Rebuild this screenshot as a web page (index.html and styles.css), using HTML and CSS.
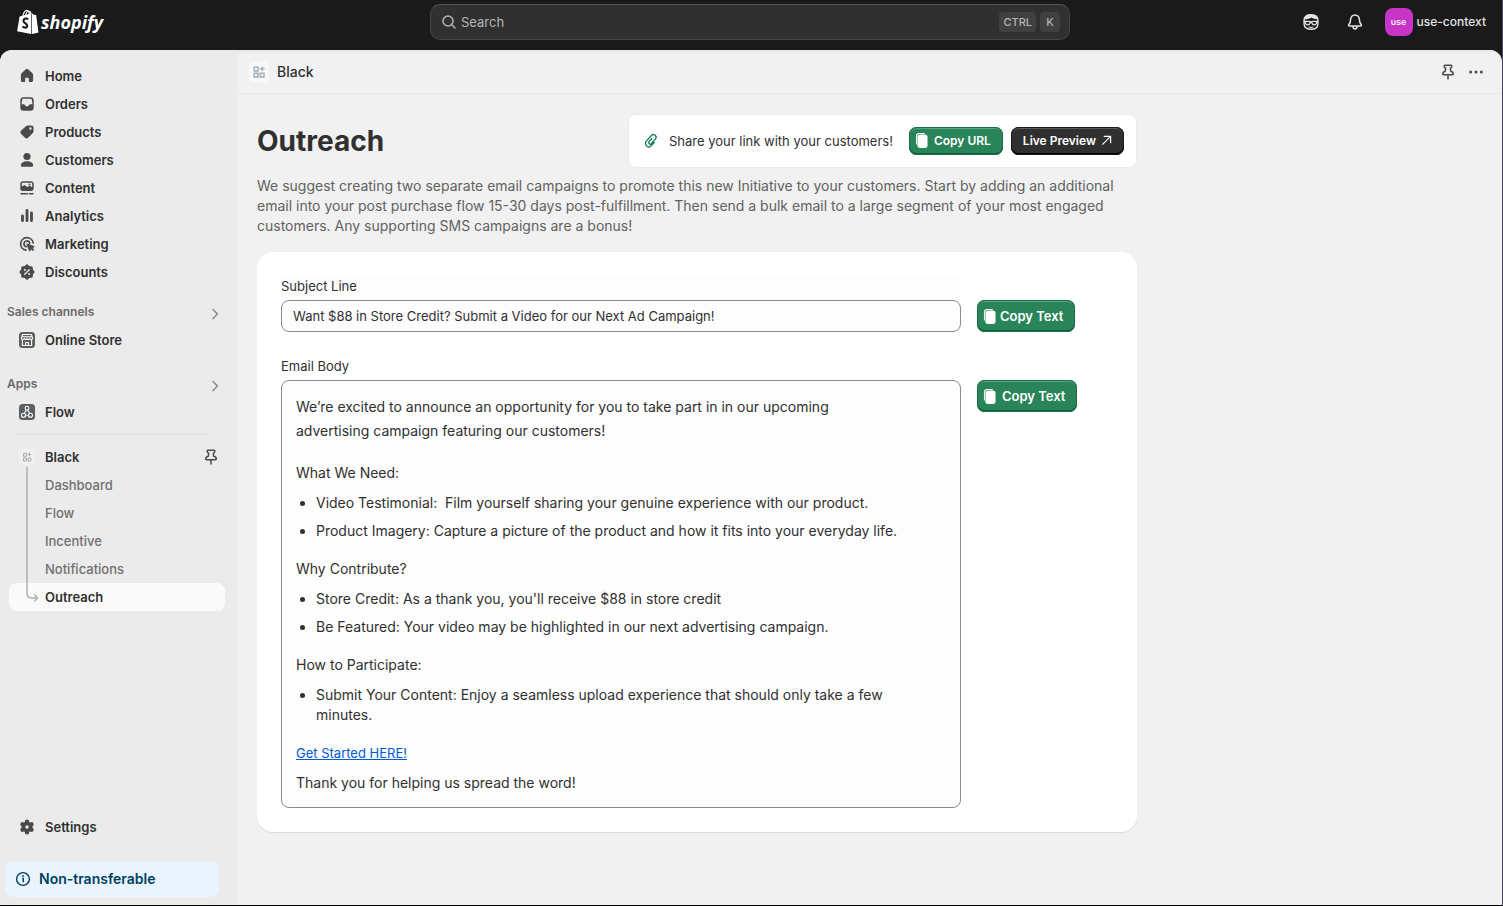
FILE: index.html
```html
<!DOCTYPE html>
<html lang="en">
<head>
<meta charset="utf-8">
<title>Outreach</title>
<link rel="stylesheet" href="styles.css">
</head>
<body>
<svg class="sprite" aria-hidden="true">
  <symbol id="pin" viewBox="0 0 20 20"><path d="M7 3.2h6c.6 0 1 .5.8 1.100l-.3.900c-.2.500-.6.800-1.200.800l.4 3.200c1.600.4 2.600 1.500 2.600 2.900 0 .5-.3.700-.7.700H5.400c-.4 0-.7-.2-.7-.700 0-1.400 1-2.500 2.600-2.900L7.700 6c-.6 0-1-.3-1.200-.800l-.3-.9C6 3.700 6.400 3.200 7 3.200zM10 12.900v4" fill="none" stroke="currentColor" stroke-width="1.5" stroke-linecap="round" stroke-linejoin="round"/></symbol>
  <symbol id="app" viewBox="0 0 20 20"><path d="M5.200 5.200h3.800v3.800H5.200zM5.200 11.200h3.800v3.800H5.200zM11.200 11.200h3.800v3.800h-3.800zM13.200 4.500v4.600M10.900 6.800h4.600" fill="none" stroke="currentColor" stroke-width="1.4"/></symbol>
  <symbol id="chev" viewBox="0 0 20 20"><path d="M8 5.500l4.500 4.500L8 14.500" fill="none" stroke="currentColor" stroke-width="1.5" stroke-linecap="round" stroke-linejoin="round"/></symbol>
  <symbol id="copy" viewBox="0 0 14 18"><path d="M4.500 1h4.800a2 2 0 0 1 1.700.900H5A3 3 0 0 0 2 4.900v9A2.500 2.500 0 0 1 1 12V4.500A3.500 3.500 0 0 1 4.500 1z" fill="#fff"/><rect x="2.600" y="2.600" width="10.900" height="14.400" rx="2.800" fill="#fff"/></symbol>
</svg>

<header class="topbar">
  <a class="logo" href="#" aria-label="Shopify">
    <svg width="22" height="26" viewBox="0 0 22 26"><path d="M6 7C6.300 3.500 8.200 1.200 10 1.400 11.700 1.500 12.400 3.600 12.300 6M8.500 7c.5-3 2-5 3.600-4.800 1.400.1 1.900 1.500 2 3.300" fill="none" stroke="#fff" stroke-width="1.100"/><path d="M2.600 7.600L14.300 4.200V25L.1 22.300z" fill="#fff"/><path d="M15 4.300l1.600 1.500 2.500.3L21.500 23.400 15 25z" fill="#fff"/><path d="M11.300 10.100C8.500 8.800 6.400 10 6.500 12c.1 2.500 3.800 2.400 3.700 4.900-.1 2.100-2.600 2.300-4.800.600" fill="none" stroke="#1a1a1a" stroke-width="2.100"/></svg>
    <span>shopify</span>
  </a>
  <label class="search">
    <svg width="16" height="16" viewBox="0 0 16 16"><circle cx="7" cy="7" r="5" fill="none" stroke="currentColor" stroke-width="1.500"/><path d="M10.700 10.700L14 14" stroke="currentColor" stroke-width="1.500" stroke-linecap="round"/></svg>
    <input type="search" placeholder="Search" aria-label="Search">
    <kbd>CTRL</kbd><kbd>K</kbd>
  </label>
  <div class="account">
    <button class="icon-btn" aria-label="Sidekick"><svg width="20" height="20" viewBox="0 0 20 20"><path d="M3.100 8.500C3.100 4.500 6 2.800 10 2.800s6.900 1.700 6.900 5.700v3.400c0 3.400-3 5.300-6.900 5.300s-6.900-1.900-6.900-5.300z" fill="none" stroke="#e3e3e3" stroke-width="1.400"/><path d="M3 7.300c0-3 2.500-4.800 7-4.800 3.500 0 6.500 1.600 7 4.600-3-.1-5-.6-6.500-1.600C8.500 6.800 6 7.500 3 7.300z" fill="#e3e3e3"/><path d="M2.700 9.300h4.600c1.200 0 1.800.7 2.700.7s1.500-.7 2.700-.7h4.600" fill="none" stroke="#e3e3e3" stroke-width="1.300"/><path d="M4.200 10c.2 2 1 2.800 2.500 2.800S9 11.800 9.600 10.300h.8c.6 1.500 1.400 2.500 2.900 2.500s2.300-.8 2.500-2.800" fill="none" stroke="#e3e3e3" stroke-width="1.300"/><path d="M7.700 15c1.500.4 3.100.4 4.600 0" fill="none" stroke="#e3e3e3" stroke-width="1.200"/></svg></button>
    <button class="icon-btn" aria-label="Notifications"><svg width="20" height="20" viewBox="0 0 20 20"><path d="M10 3a4.400 4.400 0 0 0-4.400 4.400c0 2.400-.4 3.500-1.800 5.100-.5.600-.2 1.600.7 1.600h11c.9 0 1.200-1 .7-1.600-1.400-1.600-1.800-2.700-1.800-5.100A4.400 4.400 0 0 0 10 3zM8 14.300c0 1.600.8 2.600 2 2.600s2-1 2-2.600" fill="none" stroke="#e3e3e3" stroke-width="1.500" stroke-linejoin="round"/></svg></button>
    <button class="user"><span class="avatar">use</span><span>use-context</span></button>
  </div>
</header>

<div class="frame">
  <nav class="sidebar">
    <a class="item" href="#"><svg class="ico" viewBox="0 0 20 20"><path d="M8.900 3.200a1.600 1.600 0 0 1 2.200 0l4.100 3.900c.6.500.9 1.200.9 2v5.200c0 1-.8 1.800-1.800 1.800h-1.500c-.6 0-1-.4-1-1v-2.400c0-.6-.5-1-1-1H9.200c-.6 0-1 .4-1 1v2.400c0 .6-.4 1-1 1H5.700c-1 0-1.800-.8-1.800-1.800V9.100c0-.8.3-1.500.9-2z" fill="currentColor"/></svg>Home</a>
    <a class="item" href="#"><svg class="ico" viewBox="0 0 20 20"><path fill-rule="evenodd" d="M6.300 3.200h7.400c1.700 0 3 1.300 3 3v7.500c0 1.700-1.300 3-3 3H6.300c-1.700 0-3-1.300-3-3V6.200c0-1.700 1.300-3 3-3zm.2 1.500c-.8 0-1.300.4-1.400 1.200l-.5 4.300h2.100c.6 0 .9.300 1.200.8.500 1 1.100 1.300 2.100 1.300s1.600-.3 2.100-1.300c.3-.5.600-.8 1.200-.8h2.100l-.5-4.300c-.1-.8-.6-1.200-1.400-1.200z" fill="currentColor"/></svg>Orders</a>
    <a class="item" href="#"><svg class="ico" viewBox="0 0 20 20"><path fill-rule="evenodd" d="M10.800 3.500h3.700c1.100 0 2 .9 2 2v3.600c0 .8-.3 1.500-.9 2.100l-4.500 4.500c-.9.900-2.300.9-3.100 0L4 11.800c-.9-.9-.9-2.300 0-3.100l4.600-4.300c.6-.6 1.300-.9 2.200-.9zm2.700 4.200a1.200 1.200 0 1 0 0-2.400 1.200 1.200 0 0 0 0 2.400z" fill="currentColor"/></svg>Products</a>
    <a class="item" href="#"><svg class="ico" viewBox="0 0 20 20"><circle cx="10" cy="6.500" r="3.600" fill="currentColor"/><path d="M10 11.300c-3.500 0-6.200 1.800-6.200 4.300 0 .7.400 1.100 1 1.100h10.400c.6 0 1-.4 1-1.100 0-2.500-2.700-4.300-6.200-4.300z" fill="currentColor"/></svg>Customers</a>
    <a class="item" href="#"><svg class="ico" viewBox="0 0 20 20"><path fill-rule="evenodd" d="M5.800 3.200h8.400c1.400 0 2.500 1.100 2.500 2.500v4.900c0 1.400-1.100 2.500-2.500 2.500H5.800a2.500 2.500 0 0 1-2.500-2.500V5.700c0-1.400 1.100-2.500 2.500-2.500zm0 1.500c-.6 0-1 .4-1 1v3l1.700-1.300c.5-.4 1-.4 1.500 0L10.400 9l1.400-.9c.5-.3 1-.3 1.500 0l1.900 1.200V5.700c0-.6-.4-1-1-1z" fill="currentColor"/><circle cx="12.500" cy="6.500" r="1" fill="currentColor"/><path d="M4 15.700h6.300M12.500 15.700H16" stroke="currentColor" stroke-width="1.500" stroke-linecap="round"/></svg>Content</a>
    <a class="item" href="#"><svg class="ico" viewBox="0 0 20 20"><path d="M5.500 10v4.700M10 4.500v10.200M14.500 7v7.700" stroke="currentColor" stroke-width="2.800" stroke-linecap="round"/></svg>Analytics</a>
    <a class="item" href="#"><svg class="ico" viewBox="0 0 20 20"><path d="M16.200 9A6.300 6.300 0 1 0 9 16.200M12.700 9.200A2.900 2.900 0 1 0 9.200 12.700" fill="none" stroke="currentColor" stroke-width="1.700" stroke-linecap="round"/><path d="M10.200 9.500l6.800 2.400c.7.300.7 1.100.1 1.400l-1.400.6 1.600 1.900-1.300 1.300-1.900-1.700-.7 1.500c-.3.600-1.100.6-1.400-.1l-2.500-6.600c-.200-.4.200-.9.700-.7z" fill="currentColor"/></svg>Marketing</a>
    <a class="item" href="#"><svg class="ico" viewBox="0 0 20 20"><g fill="currentColor"><rect x="4.200" y="4.200" width="11.600" height="11.600" rx="1.500"/><rect x="4.200" y="4.200" width="11.600" height="11.600" rx="1.500" transform="rotate(45 10 10)"/></g><path d="M7.700 12.300l4.600-4.600" stroke="#ebebeb" stroke-width="1.300" stroke-linecap="round"/><circle cx="7.900" cy="8" r="1" fill="#ebebeb"/><circle cx="12.100" cy="12" r="1" fill="#ebebeb"/></svg>Discounts</a>

    <button class="section">Sales channels<svg class="ico" ><use href="#chev"/></svg></button>
    <a class="item" href="#"><svg class="ico" viewBox="0 0 20 20"><rect x="2" y="2" width="16" height="16" rx="3.500" fill="#5c5f62"/><path d="M5.500 4.500h9l1.100 4c-.2 1.200-2 1.500-2.800.1-.7 1.300-2.200 1.300-2.800 0-.6 1.300-2.100 1.300-2.800 0-.8 1.400-2.600 1.100-2.800-.1zM5.400 10v5.500h9.200V10M8.600 15.500v-3h2.800v3M4.800 6.800h10.400" fill="none" stroke="#fff" stroke-width="1.100"/></svg>Online Store</a>
    <button class="section">Apps<svg class="ico"><use href="#chev"/></svg></button>
    <a class="item" href="#"><svg class="ico" viewBox="0 0 20 20"><rect x="2" y="2" width="16" height="16" rx="3.500" fill="#5c5f62"/><g fill="none" stroke="#fff" stroke-width="1.100"><circle cx="10" cy="6.200" r="1.900"/><circle cx="6.500" cy="13.300" r="2"/><circle cx="13.500" cy="13.300" r="2"/><path d="M9.300 8l-2 3.500M10.700 8l2 3.500M10 12.400v1.800"/></g></svg>Flow</a>
    <hr>
    <div class="app-group">
      <div class="item"><svg class="ico app-mini" viewBox="0 0 20 20"><rect x="2" y="2" width="16" height="16" rx="3" fill="#f0f0f0"/><path d="M6.500 6.300h2.800v3H6.500zM6.500 11h2.800v3H6.500zM11 11h2.800v3H11zM12.400 5.700v3.600M10.600 7.500h3.600" fill="none" stroke="#a9a9a9"/></svg><a href="#">Black</a><button class="pin" aria-label="Unpin Black"><svg class="ico"><use href="#pin"/></svg></button></div>
      <a class="item sub" href="#">Dashboard</a>
      <a class="item sub" href="#">Flow</a>
      <a class="item sub" href="#">Incentive</a>
      <a class="item sub" href="#">Notifications</a>
      <a class="item sub current" href="#" aria-current="page">Outreach</a>
      <svg class="branch" width="14" height="136" viewBox="0 0 14 136"><path d="M1 0v126q0 5 5 5h5M8.500 127.500l3 3.500-3 3.500" fill="none" stroke="#b0b0b0" stroke-width="1.500"/></svg>
    </div>
    <div class="side-end">
      <a class="item" href="#"><svg class="ico" viewBox="0 0 20 20"><path d="M10 4.800v10.400M5.500 7.400l9 5.200M5.500 12.600l9-5.200" stroke="currentColor" stroke-width="4.400" stroke-linecap="round"/><circle cx="10" cy="10" r="5.400" fill="currentColor"/><circle cx="10" cy="10" r="1.700" fill="#ebebeb"/></svg>Settings</a>
      <a class="notice" href="#"><svg width="16" height="16" viewBox="0 0 16 16"><circle cx="8" cy="8" r="6.400" fill="none" stroke="currentColor" stroke-width="1.400"/><path d="M7.300 7.500H8.300V11.300" fill="none" stroke="currentColor" stroke-width="1.400"/><circle cx="8" cy="5" r=".9" fill="currentColor"/></svg>Non-transferable</a>
    </div>
  </nav>

  <main class="main">
    <div class="appbar">
      <svg class="ico app-ico"><use href="#app"/></svg>
      <span class="app-name">Black</span>
      <button class="bar-btn" aria-label="Pin"><svg class="ico"><use href="#pin"/></svg></button>
      <button class="bar-btn" aria-label="More actions"><svg class="ico" viewBox="0 0 20 20"><circle cx="4.600" cy="10" r="1.500" fill="currentColor"/><circle cx="10" cy="10" r="1.500" fill="currentColor"/><circle cx="15.400" cy="10" r="1.500" fill="currentColor"/></svg></button>
    </div>
    <div class="content">
      <div class="heading">
        <h1>Outreach</h1>
        <div class="share">
          <svg class="ico clip" viewBox="0 0 20 20"><path d="M13.400 9v4.200a3.400 3.400 0 0 1-6.800 0V5.700a2.700 2.700 0 0 1 5.400 0v6.100a1.500 1.500 0 0 1-3 0V7.800" transform="rotate(42 10 10)" fill="none" stroke="#1f8556" stroke-width="1.400" stroke-linecap="round"/></svg>
          <span class="share-text">Share your link with your customers!</span>
          <button class="btn small"><svg class="copy"><use href="#copy"/></svg>Copy URL</button>
          <button class="btn small dark">Live Preview<svg width="11" height="11" viewBox="0 0 12 12"><path d="M1.500 10.500l9-9M3 1.500h7.500V9" fill="none" stroke="#fff" stroke-width="1.300"/></svg></button>
        </div>
      </div>
      <p class="intro">We suggest creating two separate email campaigns to promote this new Initiative to your customers. Start by adding an additional email into your post purchase flow 15-30 days post-fulfillment. Then send a bulk email to a large segment of your most engaged customers. Any supporting SMS campaigns are a bonus!</p>
      <section class="card">
        <div class="row">
          <div class="field">
            <label class="tinted" for="subject">Subject Line</label>
            <input id="subject" type="text" value="Want $88 in Store Credit? Submit a Video for our Next Ad Campaign!">
          </div>
          <button class="btn"><svg class="copy"><use href="#copy"/></svg>Copy Text</button>
        </div>
        <div class="row">
          <div class="field">
            <h2 id="body-label">Email Body</h2>
            <div class="mail" role="group" aria-labelledby="body-label">
              <p class="lead">We’re excited to announce an opportunity for you to take part in in our upcoming advertising campaign featuring our customers!</p>
              <h3>What We Need:</h3>
              <ul><li>Video Testimonial:&nbsp; Film yourself sharing your genuine experience with our product.</li><li>Product Imagery: Capture a picture of the product and how it fits into your everyday life.</li></ul>
              <h3>Why Contribute?</h3>
              <ul><li>Store Credit: As a thank you, you'll receive $88 in store credit</li><li>Be Featured: Your video may be highlighted in our next advertising campaign.</li></ul>
              <h3>How to Participate:</h3>
              <ul><li>Submit Your Content: Enjoy a seamless upload experience that should only take a few minutes.</li></ul>
              <a class="start" href="#">Get Started HERE!</a>
              <p>Thank you for helping us spread the word!</p>
            </div>
          </div>
          <button class="btn wide"><svg class="copy"><use href="#copy"/></svg>Copy Text</button>
        </div>
      </section>
    </div>
  </main>
</div>
</body>
</html>
```
FILE: styles.css
```css
* { box-sizing: border-box; }
body {
  margin: 0;
  min-height: 100vh;
  display: flex;
  flex-direction: column;
  background: #1a1a1a;
  border-right: 1px solid #4b465c;
  border-bottom: 1px solid #000;
  font: 425 13px/20px Inter, sans-serif;
  color: #303030;
}
button { font: inherit; color: inherit; background: none; border: 0; padding: 0; }
a { color: inherit; text-decoration: none; }
h1, h2, h3, p, ul { margin: 0; }
svg { flex: none; display: block; }
.sprite { position: absolute; width: 0; height: 0; }
.ico { width: 20px; height: 20px; }

.topbar {
  display: grid;
  grid-template-columns: 1fr minmax(0, 640px) 1fr;
  height: 50px;
  padding: 4px 16px 10px 14px;
  align-items: center;
  color: #e3e3e3;
}
.logo {
  display: flex;
  align-items: center;
  gap: 2px;
  padding-left: 3px;
  color: #fff;
  font: italic 700 18px/26px "Open Sans", sans-serif;
}
.search {
  display: flex;
  align-items: center;
  gap: 4px;
  height: 36px;
  padding: 0 9px 0 10px;
  background: #303030;
  border: 1px solid #444;
  border-top-color: #555;
  border-radius: 10px;
  color: #b5b5b5;
}
.search input {
  flex: 1;
  min-width: 0;
  background: none;
  border: 0;
  padding: 0;
  outline: 0;
  font: 400 13px/20px Inter, sans-serif;
  color: #e3e3e3;
}
.search input::placeholder { color: #b5b5b5; opacity: 1; }
kbd {
  font: 500 11px/20px Inter, sans-serif;
  background: #404040;
  border-radius: 4px;
  padding: 0 4px;
  min-width: 20px;
  text-align: center;
}
.account { display: flex; justify-content: flex-end; align-items: center; gap: 24px; }
.user { display: flex; align-items: center; gap: 4px; font-size: 12px; font-weight: 550; margin-left: -4px; }
.avatar {
  width: 28px;
  height: 28px;
  border-radius: 8px;
  background: #c734c7;
  color: #fff;
  font-size: 9px;
  line-height: 28px;
  text-align: center;
}

.frame {
  flex: 1;
  display: flex;
  background: #f1f1f1;
  border-radius: 12px 12px 0 0;
  overflow: hidden;
}
.sidebar {
  width: 237px;
  flex: none;
  display: flex;
  flex-direction: column;
  padding: 12px 12px 8px 9px;
  background: #ebebeb;
}
.item {
  display: flex;
  align-items: center;
  gap: 8px;
  height: 28px;
  padding-left: 8px;
  font-weight: 600;
  border-radius: 8px;
}
.item .ico { color: #4a4a4a; }
.section {
  display: flex;
  justify-content: space-between;
  align-items: center;
  height: 28px;
  margin: 12px 0 0 -2px;
  font-size: 12px;
  font-weight: 600;
  color: #6a6a6a;
}
.item + .section { margin-top: 16px; }
.item:nth-of-type(8) + .section { margin-top: 12px; }
.section .ico { margin-top: 4px; color: #8a8a8a; }
hr { width: 190px; margin: 8px 0 8px 8px; border: 0; border-top: 1px solid #e0e0e0; }
.app-group { position: relative; }
.pin { margin: 0 4px 0 auto; }
.item.sub { padding-left: 36px; font-weight: 500; color: #707070; }
.item.current { background: #fafafa; font-weight: 600; color: #303030; }
.branch { position: absolute; left: 17px; top: 24px; }
.side-end { margin-top: auto; }
.notice {
  display: flex;
  align-items: center;
  gap: 8px;
  height: 36px;
  margin: 20px 6px 0 -4px;
  padding-left: 10px;
  border-radius: 8px;
  background: #eaf4ff;
  color: #00405f;
  font-size: 14px;
  font-weight: 600;
}

.main { flex: 1; min-width: 0; box-shadow: inset 0 2px 2px #e6e6e6; }
.appbar {
  display: flex;
  align-items: center;
  gap: 8px;
  height: 44px;
  padding: 0 16px 0 12px;
  border-bottom: 1px solid #e8e8e8;
  color: #4a4a4a;
}
.app-ico { background: #f6f8fa; border-radius: 4px; color: #a3adb5; }
.app-name { flex: 1; font-size: 14px; font-weight: 500; color: #303030; }
.content { max-width: 920px; padding: 20px; }
.heading { display: flex; justify-content: space-between; align-items: center; margin-bottom: 8px; }
h1 { font-size: 28px; line-height: 36px; font-weight: 700; }
.share {
  display: flex;
  align-items: center;
  gap: 8px;
  height: 54px;
  padding: 0 12px;
  background: #fff;
  border: 1px solid #ebebeb;
  border-radius: 8px;
}
.share-text { margin-right: 8px; }
.btn {
  display: flex;
  align-items: center;
  gap: 4px;
  height: 32px;
  padding: 0 12px 0 6px;
  border-radius: 8px;
  background: #29845a;
  box-shadow: inset 0 0 0 1px #1c7049, inset 0 -2px 0 #0e5a37, inset 0 2px 0 #5aa381;
  color: #fff;
  font-weight: 600;
}
.btn.wide { gap: 6px; }
.btn.small { height: 28px; gap: 6px; font-size: 12px; padding-bottom: 1px; }
.btn.dark {
  padding: 0 12px 1px;
  gap: 5px;
  background: #303030;
  box-shadow: inset 0 0 0 1px #1a1a1a, inset 0 -2px 0 #000, inset 0 2px 0 #5a5a5a;
}
.copy { width: 13px; height: 17px; }
.intro { font-size: 14px; color: #616161; margin-bottom: 16px; }
.card {
  display: grid;
  gap: 24px;
  padding: 24px;
  background: #fff;
  border-radius: 16px;
  box-shadow: 0 1px 1px #dcdcdc;
}
.row { display: flex; gap: 16px; align-items: flex-start; }
.row > .btn { margin-top: 24px; flex: none; }
.field { flex: 0 1 680px; min-width: 0; }
.field label, .field h2 { display: block; font: inherit; line-height: 20px; padding-bottom: 4px; }
.tinted { background: #fdfdfd; }
.field input {
  display: block;
  width: 100%;
  height: 32px;
  padding: 0 11px;
  border: 1px solid #8a8a8a;
  border-radius: 8px;
  background: #fdfdfd;
  font: inherit;
  color: inherit;
}
.mail {
  padding: 14px 40px 12px 14px;
  border: 1px solid #8a8a8a;
  border-radius: 8px;
  background: #fdfdfd;
  font-size: 14px;
  line-height: 24px;
}
.lead { margin-bottom: 18px; padding-right: 40px; }
h3 { font: inherit; }
.mail ul { padding-left: 20px; margin: 8px 0 16px; display: grid; gap: 8px; line-height: 20px; }
.start { display: block; width: fit-content; margin-bottom: 6px; font-size: 13px; color: #005bd3; text-decoration: underline; }
```
